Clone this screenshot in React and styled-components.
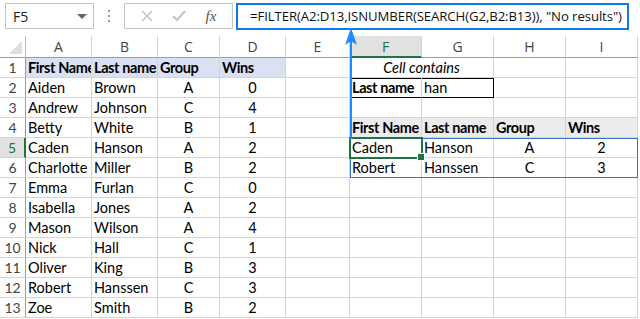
import React from 'react';
import styled, {createGlobalStyle} from 'styled-components';

const GlobalStyle = createGlobalStyle`
    body {
        margin: 0;
        background: #fff;
        overflow: hidden;
    }
    * { box-sizing: border-box; }
`;

const COLS = [26, 66, 66, 62, 66, 64, 72, 72, 72, 72];
const LETTERS = ['A', 'B', 'C', 'D', 'E', 'F', 'G', 'H', 'I'];
const GRID = '#d4d4d4';
const GREEN = '#217346';

const Page = styled.div`
    position: relative;
    width: 640px;
    height: 319px;
    font-family: Lato, "Open Sans", sans-serif;
`;

const FormulaBar = styled.div`
    display: flex;
    align-items: center;
    height: 36px;
    padding: 0 11px 4px 5px;
`;

const NameBox = styled.div`
    display: flex;
    align-items: center;
    justify-content: space-between;
    width: 89px;
    height: 26px;
    border: 1px solid #c6c6c6;
    padding: 0 6px 0 7px;
    font-family: "Open Sans", sans-serif;
    font-size: 14px;
    color: #222;
`;

const Caret = styled.span`
    width: 0;
    height: 0;
    border-left: 5px solid transparent;
    border-right: 5px solid transparent;
    border-top: 5px solid #666;
`;

const Dots = styled.div`
    display: flex;
    flex-direction: column;
    gap: 3px;
    width: 30px;
    align-items: center;
    span {
        width: 2px;
        height: 2px;
        background: #9a9a9a;
    }
`;

const ButtonsBox = styled.div`
    display: flex;
    align-items: center;
    justify-content: space-around;
    width: 109px;
    height: 26px;
    border: 1px solid #c6c6c6;
    padding: 0 6px;
    color: #c8c8c8;
`;

const Fx = styled.span`
    font-family: "Liberation Serif", serif;
    font-style: italic;
    font-size: 15px;
    color: #555;
`;

const FormulaBox = styled.div`
    flex: 1;
    display: flex;
    align-items: center;
    height: 27px;
    margin-left: 3px;
    border: 2px solid #0f7ae5;
    padding-left: 12px;
    font-family: "Open Sans", sans-serif;
    font-size: 13.2px;
    letter-spacing: -0.1px;
    color: #111;
    white-space: nowrap;
    overflow: hidden;
`;

const Sheet = styled.div`
    display: grid;
    grid-template-columns: ${COLS.map(c => c + 'px').join(' ')};
    grid-auto-rows: 20px;
    grid-template-rows: 22px;
`;

const Corner = styled.div`
    position: relative;
    border-right: 1px solid #bdbdbd;
    border-bottom: 1px solid #9e9e9e;
    &::after {
        content: '';
        position: absolute;
        right: 3px;
        bottom: 3px;
        border-left: 13px solid transparent;
        border-bottom: 13px solid #dedede;
    }
`;

const ColHead = styled.div`
    display: flex;
    align-items: center;
    justify-content: center;
    font-family: "Open Sans", sans-serif;
    font-size: 14px;
    color: ${p => p.$active ? GREEN : '#444'};
    background: ${p => p.$active ? '#e1e1e1' : '#fff'};
    border-right: 1px solid ${GRID};
    border-bottom: ${p => p.$active ? `2px solid ${GREEN}` : '1px solid #9e9e9e'};
`;

const RowHead = styled.div`
    display: flex;
    align-items: center;
    justify-content: center;
    font-size: 14px;
    color: ${p => p.$active ? GREEN : '#444'};
    background: ${p => p.$active ? '#e1e1e1' : '#fff'};
    border-right: ${p => p.$active ? `2px solid ${GREEN}` : '1px solid #9e9e9e'};
    border-bottom: 1px solid ${GRID};
`;

const Cell = styled.div`
    display: flex;
    align-items: center;
    justify-content: ${p => p.$align === 'center' ? 'center' : 'flex-start'};
    grid-column: span ${p => p.$span || 1};
    padding: 0 2px;
    font-size: 14.5px;
    font-weight: ${p => p.$bold ? 700 : 400};
    letter-spacing: ${p => p.$bold ? '-0.4px' : '0'};
    font-style: ${p => p.$italic ? 'italic' : 'normal'};
    color: #000;
    background: ${p => p.$bg || 'transparent'};
    border-right: 1px solid ${p => p.$frameR ? '#000' : GRID};
    border-bottom: 1px solid ${p => p.$frameB ? '#000' : GRID};
    box-shadow: ${p => p.$frameT ? `inset 0 1px 0 #000${p.$frameL ? ', inset 1px 0 0 #000' : ''}` : 'none'};
    white-space: nowrap;
    overflow: hidden;
`;

const Selection = styled.div`
    position: absolute;
    left: 349px;
    top: 137px;
    width: 74px;
    height: 22px;
    border: 2px solid ${GREEN};
    &::after {
        content: '';
        position: absolute;
        right: -4px;
        bottom: -4px;
        width: 6px;
        height: 6px;
        background: ${GREEN};
        border: 1px solid #fff;
    }
`;

const ResultFrame = styled.div`
    position: absolute;
    left: 350px;
    top: 138px;
    width: 288px;
    height: 40px;
    border: 1.5px solid #3c73cf;
    pointer-events: none;
`;

const Arrow = styled.svg`
    position: absolute;
    left: 343px;
    top: 28px;
`;

const people = [
    ['Aiden', 'Brown', 'A', 0],
    ['Andrew', 'Johnson', 'C', 4],
    ['Betty', 'White', 'B', 1],
    ['Caden', 'Hanson', 'A', 2],
    ['Charlotte', 'Miller', 'B', 2],
    ['Emma', 'Furlan', 'C', 0],
    ['Isabella', 'Jones', 'A', 2],
    ['Mason', 'Wilson', 'A', 4],
    ['Nick', 'Hall', 'C', 1],
    ['Oliver', 'King', 'B', 3],
    ['Robert', 'Hanssen', 'C', 3],
    ['Zoe', 'Smith', 'B', 2],
];

const HEAD_BG = '#d9e1f2';

const rightSide = (r) => {
    switch (r) {
        case 1:
            return [<Cell key="fg" $span={2} $italic $align="center">Cell contains</Cell>, <Cell key="h"/>, <Cell key="i"/>];
        case 2:
            return [
                <Cell key="f" $bold $frameT $frameL $frameB>Last name</Cell>,
                <Cell key="g" $frameT $frameR $frameB>han</Cell>,
                <Cell key="h"/>, <Cell key="i"/>,
            ];
        case 4:
            return ['First Name', 'Last name', 'Group', 'Wins'].map(t =>
                <Cell key={t} $bold $bg="#ececec">{t}</Cell>);
        case 5:
        case 6: {
            const p = r === 5 ? people[3] : people[10];
            return [
                <Cell key="f">{p[0]}</Cell>,
                <Cell key="g">{p[1]}</Cell>,
                <Cell key="h" $align="center">{p[2]}</Cell>,
                <Cell key="i" $align="center">{p[3]}</Cell>,
            ];
        }
        default:
            return [<Cell key="f"/>, <Cell key="g"/>, <Cell key="h"/>, <Cell key="i"/>];
    }
};

const leftSide = (r) => {
    if (r === 1) {
        return ['First Name', 'Last name', 'Group', 'Wins'].map(t =>
            <Cell key={t} $bold $bg={HEAD_BG}>{t}</Cell>);
    }
    const p = people[r - 2];
    return [
        <Cell key="a">{p[0]}</Cell>,
        <Cell key="b">{p[1]}</Cell>,
        <Cell key="c" $align="center">{p[2]}</Cell>,
        <Cell key="d" $align="center">{p[3]}</Cell>,
    ];
};

const App = () => {
    const rows = Array.from({length: 13}, (_, i) => i + 1);
    return (
        <Page>
            <GlobalStyle/>
            <FormulaBar>
                <NameBox>F5<Caret/></NameBox>
                <Dots><span/><span/><span/></Dots>
                <ButtonsBox>
                    <svg width="12" height="12" viewBox="0 0 12 12">
                        <path d="M1 1 L11 11 M11 1 L1 11" stroke="#c4c4c4" strokeWidth="1.6"/>
                    </svg>
                    <svg width="14" height="12" viewBox="0 0 14 12">
                        <path d="M1 6 L5 10 L13 1" stroke="#c4c4c4" strokeWidth="2" fill="none"/>
                    </svg>
                    <Fx>fx</Fx>
                </ButtonsBox>
                <FormulaBox>=FILTER(A2:D13,ISNUMBER(SEARCH(G2,B2:B13)), "No results")</FormulaBox>
            </FormulaBar>
            <Sheet>
                <Corner/>
                {LETTERS.map(l => <ColHead key={l} $active={l === 'F'}>{l}</ColHead>)}
                {rows.map(r => (
                    <React.Fragment key={r}>
                        <RowHead $active={r === 5}>{r}</RowHead>
                        {leftSide(r)}
                        <Cell/>
                        {rightSide(r)}
                    </React.Fragment>
                ))}
            </Sheet>
            <ResultFrame/>
            <Selection/>
            <Arrow width="16" height="111" viewBox="0 0 16 111">
                <path d="M8 4 L8 111" stroke="#1a8cff" strokeWidth="2"/>
                <path d="M8 0 L14 17 L8 13 L2 17 Z" fill="#1a8cff"/>
            </Arrow>
        </Page>
    );
};

export default App;
